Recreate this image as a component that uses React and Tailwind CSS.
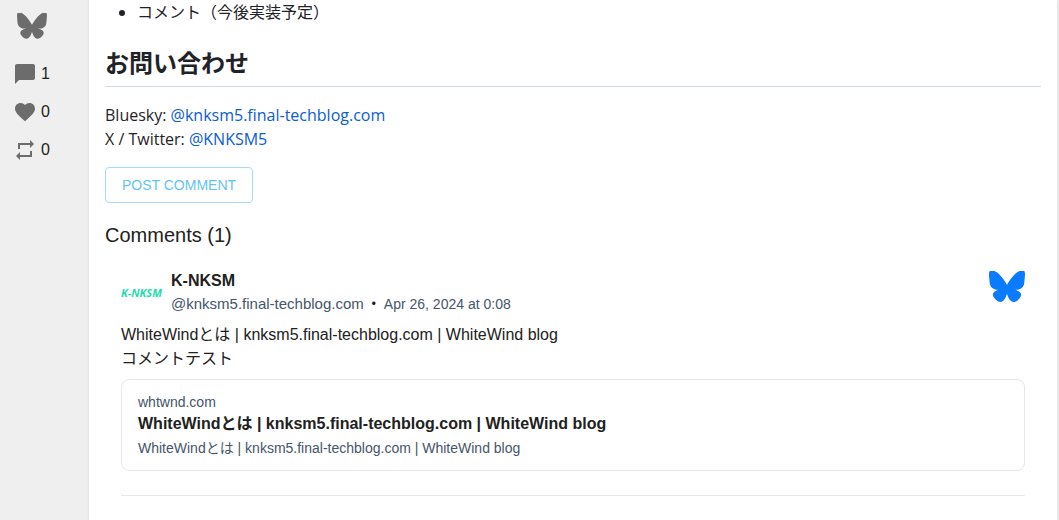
import React from 'react';
import { MdChatBubble, MdFavorite, MdRepeat } from 'react-icons/md';

const Butterfly = ({ className }) => (
  <svg viewBox="10 22 580 512" className={className} fill="currentColor" aria-hidden="true">
    <path d="m135.72 44.03c66.496 49.921 138.02 151.14 164.28 205.46 26.262-54.316 97.782-155.54 164.28-205.46 47.98-36.021 125.72-63.892 125.72 24.795 0 17.712-10.155 148.79-16.111 170.07-20.703 73.984-96.144 92.854-163.25 81.433 117.3 19.964 147.14 86.092 82.697 152.22-122.39 125.59-175.91-31.511-189.63-71.766-2.514-7.3797-3.6904-10.832-3.7077-7.8964-0.0174-2.9357-1.1937 0.51669-3.7077 7.8964-13.714 40.255-67.233 197.36-189.63 71.766-64.444-66.128-34.605-132.26 82.697-152.22-67.108 11.421-142.55-7.4491-163.25-81.433-5.9562-21.282-16.111-152.36-16.111-170.07 0-88.687 77.742-60.816 125.72-24.795z" />
  </svg>
);

const stats = [
  { name: 'comments', Icon: MdChatBubble, count: 1 },
  { name: 'likes', Icon: MdFavorite, count: 0 },
  { name: 'reposts', Icon: MdRepeat, count: 0 },
];

const Sidebar = () => (
  <aside className="w-[89px] shrink-0 pt-[13px] pl-[13px] text-[#6c6c6c]">
    <a href="#bluesky" aria-label="Bluesky" className="ml-1 block w-[30px]">
      <Butterfly className="w-full" />
    </a>
    <ul className="mt-[23px] flex flex-col gap-[14px]">
      {stats.map(({ name, Icon, count }) => (
        <li key={name} aria-label={name} className="flex items-center gap-1">
          <Icon className="size-6" />
          <span className="text-base text-[#212121]">{count}</span>
        </li>
      ))}
    </ul>
  </aside>
);

const Article = () => (
  <article className="font-['Open_Sans','Noto_Sans_CJK_JP',sans-serif] text-base leading-6 text-[#1f2328]">
    <ul className="list-disc pl-8">
      <li>コメント（今後実装予定）</li>
    </ul>
    <h2 className="mt-6 border-b border-[#d1d9e0] pb-2 text-2xl leading-[30px] font-bold">お問い合わせ</h2>
    <p className="mt-4">
      Bluesky: <a href="#profile" className="text-[#0b5cd5]">@knksm5.final-techblog.com</a>
      <br />
      X / Twitter: <a href="#twitter" className="text-[#0b5cd5]">@KNKSM5</a>
    </p>
  </article>
);

const Comment = () => (
  <li className="px-4">
    <div className="border-b border-gray-200 pb-6">
      <div className="flex items-start">
        <div className="mt-1 flex size-10 items-center font-['Open_Sans',sans-serif] text-[11px] font-bold whitespace-nowrap text-[#1fdcae] italic">
          K-NKSM
        </div>
        <div className="ml-[10px] grow">
          <p className="text-base leading-6 font-bold">K-NKSM</p>
          <p className="text-sm leading-[22px] text-slate-600">
            <a href="#profile" className="text-[15px]">@knksm5.final-techblog.com</a>
            <span className="mx-[2px] text-base leading-5 text-[#212121]">・</span>
            <time dateTime="2024-04-26T00:08">Apr 26, 2024 at 0:08</time>
          </p>
        </div>
        <a href="#post" aria-label="View on Bluesky" className="mt-[2px] w-9 text-[#0a7aff]">
          <Butterfly className="w-full" />
        </a>
      </div>
      <p className="mt-2 text-base leading-6">
        WhiteWindとは | knksm5.final-techblog.com | WhiteWind blog
        <br />
        コメントテスト
      </p>
      <a href="#card" className="mt-2 block rounded-lg border border-gray-200 px-4 pt-3 pb-[10px]">
        <span className="block text-sm leading-5 text-slate-600">whtwnd.com</span>
        <span className="block text-base leading-6 font-bold">
          WhiteWindとは | knksm5.final-techblog.com | WhiteWind blog
        </span>
        <span className="block text-sm leading-6 text-slate-600">
          WhiteWindとは | knksm5.final-techblog.com | WhiteWind blog
        </span>
      </a>
    </div>
  </li>
);

const App = () => {
  return (
    <div className="flex min-h-screen bg-[#efefef] pr-[2px] font-['Liberation_Sans','Noto_Sans_CJK_JP',sans-serif] text-[#212121]">
      <Sidebar />
      <main className="min-w-0 grow bg-white px-4 shadow">
        <Article />
        <button
          type="button"
          className="mt-4 h-9 rounded border border-[#a6dcf7] px-4 text-sm text-[#62c4f2]"
        >
          POST COMMENT
        </button>
        <h2 className="mt-4 text-xl leading-8">Comments (1)</h2>
        <ul className="mt-[18px]">
          <Comment />
        </ul>
      </main>
    </div>
  );
};

export default App;
